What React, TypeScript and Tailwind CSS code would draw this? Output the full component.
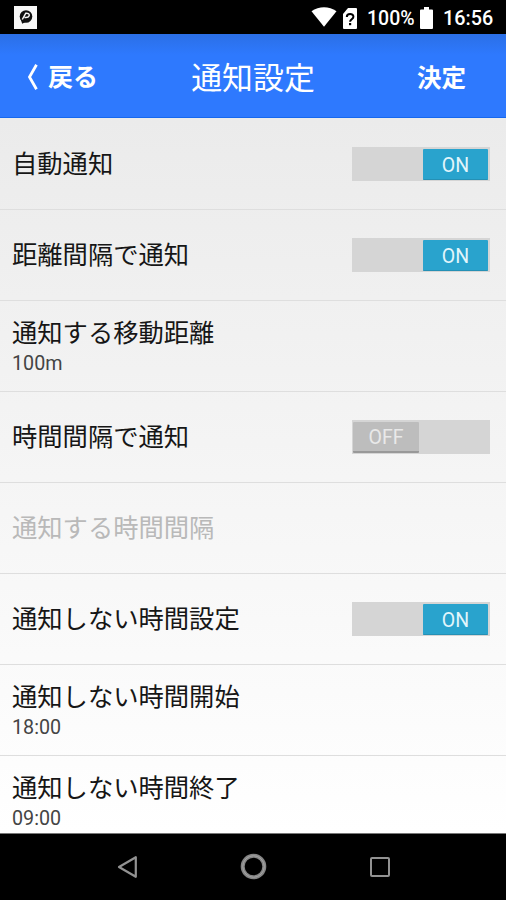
import clsx from 'clsx';

interface Setting {
  title: string;
  value?: string;
  toggle?: boolean;
  disabled?: boolean;
}

const SETTINGS: Setting[] = [
  { title: '自動通知', toggle: true },
  { title: '距離間隔で通知', toggle: true },
  { title: '通知する移動距離', value: '100m' },
  { title: '時間間隔で通知', toggle: false },
  { title: '通知する時間間隔', disabled: true },
  { title: '通知しない時間設定', toggle: true },
  { title: '通知しない時間開始', value: '18:00' },
  { title: '通知しない時間終了', value: '09:00' },
];

function StatusBar() {
  return (
    <div className="flex h-[34px] shrink-0 items-center bg-black pl-[14px] pr-[11px] text-white">
      <svg className="size-[23px]" viewBox="0 0 23 23">
        <rect width="23" height="23" fill="#f8f8f8" />
        <circle cx="12" cy="10.5" r="6.300" fill="#111" />
        <path d="M6.500 12.500L8.200 17.800L12.500 15.500Z" fill="#111" />
        <path d="M8.300 13.500L11.800 7.200Q15.800 7 15.200 9.800Q14.300 12 10.500 11.500" fill="none" stroke="#f8f8f8" strokeWidth="1.500" />
      </svg>
      <div className="ml-auto flex items-center">
        <svg className="h-[20px] w-[26px]" viewBox="0 0 26 20">
          <path d="M0.500 4.300C8 -1.200 18 -1.200 25.500 4.300L13 19.700Z" fill="#fff" />
        </svg>
        <svg className="ml-[6px] mt-[2px] h-[21px] w-[14px]" viewBox="0 0 14 21">
          <path d="M5 0h8q1 0 1 1v19q0 1-1 1H1q-1 0-1-1V6Z" fill="#fff" />
          <path d="M3.800 9c0-4 6.600-4 6.600-.3 0 2.500-3.300 2.500-3.300 5" fill="none" stroke="#000" strokeWidth="2" />
          <rect x="6" y="15" width="2.200" height="2.200" fill="#000" />
        </svg>
        <span className="ml-[10px] mt-[3px] w-[48px] whitespace-nowrap text-[19.500px] font-medium leading-5">100%</span>
        <svg className="ml-[5px] mt-[1px] h-[22px] w-[13px]" viewBox="0 0 13 22">
          <path d="M4 0h5v2.500h3q1 0 1 1v17.500q0 1-1 1H1q-1 0-1-1V3.500q0-1 1-1h3Z" fill="#fff" />
        </svg>
        <span className="ml-[10px] mt-[3px] w-[52px] whitespace-nowrap text-[19.800px] font-medium leading-5">16:56</span>
      </div>
    </div>
  );
}

function Header() {
  return (
    <header className="grid h-[84px] shrink-0 grid-cols-3 items-center border-b border-[#1668ee] bg-linear-to-b from-[#2b6fe6] via-[#2e79fe] via-25% to-[#2e79fe] text-white">
      <button className="flex items-center pl-[27px] pt-[5px] text-[25px] font-bold">
        <svg className="mb-[2px] mr-[10px] h-[26px] w-[11px]" viewBox="0 0 11 26">
          <path d="M9.500 .8L2.500 13l7 12.200" fill="none" stroke="#fff" strokeWidth="2.800" />
        </svg>
        戻る
      </button>
      <h1 className="whitespace-nowrap pt-[7px] text-center text-[30.900px]">通知設定</h1>
      <button className="pr-[40px] pt-[7px] text-right text-[24.500px] font-bold">決定</button>
    </header>
  );
}

function Toggle({ on }: { on: boolean }) {
  return (
    <div className={clsx('flex h-[34px] w-[138px] bg-[#d5d5d5] pl-px pr-[2px] pt-[2px]', on && 'justify-end')}>
      <div
        className={clsx(
          'flex h-[31px] items-center justify-center rounded-[1px] text-[19.500px] leading-none',
          on
            ? 'w-[65px] border-b border-[#2590b5] bg-[#29a3cd] text-[#e2f5fb]'
            : 'w-[66px] border-b-2 border-[#999] bg-[#bdbdbd] text-[#e9e9e9]'
        )}
      >
        <span className="mt-[3px]">{on ? 'ON' : 'OFF'}</span>
      </div>
    </div>
  );
}

function SettingRow({ title, value, toggle, disabled }: Setting) {
  return (
    <li className="flex h-[91px] shrink-0 items-center justify-between border-b border-[#dedede] pl-3 pr-4">
      <div className={value ? 'pb-[2px]' : 'pt-px'}>
        <div className={clsx('whitespace-nowrap text-[25.300px] leading-[36px]', disabled ? 'text-[#b9b9b9]' : 'text-[#161616]')}>
          {title}
        </div>
        {value && <div className="text-[19.700px] leading-[23px] text-[#444]">{value}</div>}
      </div>
      {toggle !== undefined && <Toggle on={toggle} />}
    </li>
  );
}

function NavBar() {
  return (
    <nav className="flex h-[67px] shrink-0 items-center justify-between border-t border-[#777] bg-black pl-[117px] pr-[115px]">
      <svg className="h-[24px] w-[21px]" viewBox="0 0 21 24">
        <path d="M2 12L18.800 2.200v19.600Z" fill="none" stroke="#929292" strokeWidth="2.200" strokeLinejoin="round" />
      </svg>
      <svg className="size-[28px]" viewBox="0 0 28 28">
        <circle cx="13.500" cy="13.500" r="10.800" fill="none" stroke="#858585" strokeWidth="4" />
        <circle cx="13.500" cy="13.500" r="10.800" fill="none" stroke="#a5a5a5" strokeWidth="1" />
      </svg>
      <svg className="size-[21px]" viewBox="0 0 21 21">
        <rect x="1" y="1" width="18" height="18" rx="1" fill="none" stroke="#929292" strokeWidth="2" />
      </svg>
    </nav>
  );
}

export default function App() {
  return (
    <div
      lang="ja"
      className="flex h-[900px] w-[506px] flex-col overflow-hidden bg-black font-[Roboto,'Noto_Sans_CJK_JP',sans-serif]"
    >
      <StatusBar />
      <Header />
      <ul className="flex min-h-0 flex-1 flex-col overflow-hidden bg-linear-to-b from-[#ebebeb] to-white pt-px">
        {SETTINGS.map((setting) => (
          <SettingRow key={setting.title} {...setting} />
        ))}
      </ul>
      <NavBar />
    </div>
  );
}
